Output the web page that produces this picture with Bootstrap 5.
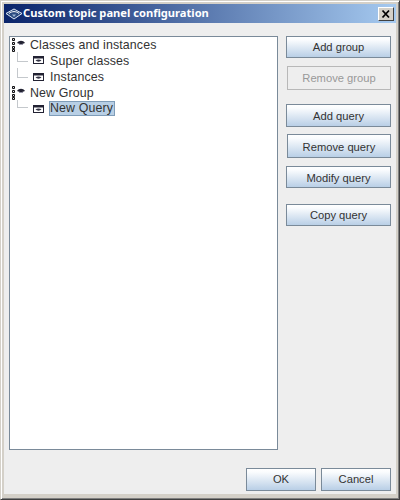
<!DOCTYPE html>
<html lang="en">
<head>
<meta charset="utf-8">
<title>Custom topic panel configuration</title>
<link href="https://cdn.jsdelivr.net/npm/bootstrap@5.3.0/dist/css/bootstrap.min.css" rel="stylesheet">
<style>
html,body{width:400px;height:500px;margin:0;overflow:hidden;background:#d4d0c8}
body{font-family:"Liberation Sans",Arial,sans-serif;font-size:12px;color:#333}
.win-frame{width:400px;height:500px;border:1px solid #404040;border-top-color:#d4d0c8;border-left-color:#d4d0c8;box-shadow:inset 1px 1px 0 #fff,inset -1px -1px 0 #808080;padding:3px}
.win-title{height:19px;background:linear-gradient(90deg,#0a246a,#a6caf0);color:#fff;font-family:"Noto Sans",sans-serif;font-weight:700;font-size:11.15px;padding-left:1px;padding-right:2px;flex:none}
.win-title svg{flex:none}
.win-close{width:16px;height:14px;background:#d4d0c8;border:1px solid;border-color:#fff #404040 #404040 #fff;padding:0;line-height:0;margin-left:auto}
.win-body{background:#eee;height:471px;padding:13px 5px 8px 5px}
.tree-pane{width:269px;height:414px;background:#fff;border:1px solid #7a8a99;padding:1px 0 0 1px;flex:none}
.tree-row{height:16px;white-space:nowrap;font-size:12.4px;letter-spacing:.12px;line-height:14px}
.tree-row svg{overflow:visible;flex:none}
.tree-kid{padding-left:6px}
.tree-elbow{width:11px;height:10px;border-left:1px solid #c4c8cc;border-bottom:1px solid #c4c8cc;margin-top:-2px;margin-right:5px;flex:none}
.tree-elbow.last{height:8px}
.tree-txt{margin-left:5px}
.tree-root{margin-left:4px}
.tree-sel{background:#b8cfe5;border:1px solid #7f9db9;line-height:13px;padding:0 1px 0 0;margin-left:4px;height:15px;margin-top:-1px}
.side-col{width:105px;margin-left:8px;flex:none}
.java-btn{display:block;--bs-btn-padding-x:0;--bs-btn-padding-y:0;--bs-btn-font-size:11.2px;--bs-btn-border-radius:0;--bs-btn-color:#333;--bs-btn-border-color:#7a8a99;height:22px;width:105px;border:1px solid #7a8a99;background:linear-gradient(#fff,#fafcfe 15%,#b9cfe6);color:#333;font-family:"Liberation Sans",Arial,sans-serif}
.java-btn.off{background:#eee;border-color:#b8b8b8;color:#999;opacity:1}
.shift-r{margin-left:1px;width:104px;height:24px}
.h-mid{height:23px}
.nudge{padding-top:2px}
.m-a{margin-top:8px}.m-b{margin-top:14px}.m-c{margin-top:7px}.m-d{margin-top:8px}.m-e{margin-top:16px}
.foot-bar{margin-top:18px;gap:5px}
.foot-bar .java-btn{width:70px;height:23px}
</style>
</head>
<body>
<div class="win-frame d-flex flex-column">
  <div class="win-title d-flex align-items-center">
    <svg width="18" height="12" viewBox="0 0 18 12"><path d="M1 5.500 9 1l8 4.500L9 11z" fill="#2b4a80" stroke="#dfe8f4" stroke-width="1"/><path d="M4 5.500C7 3 11 3 14 5.500" fill="none" stroke="#fff"/><path d="M7 6.500h4L9 9z" fill="#9db6d6"/></svg>
    <span>Custom topic panel configuration</span>
    <button class="win-close" aria-label="Close"><svg width="14" height="12" viewBox="0 0 14 12"><path d="M3.500 2.500 10 9.500M10 2.500 3.500 9.500" stroke="#000" stroke-width="1.800"/></svg></button>
  </div>
  <div class="win-body d-flex flex-column">
    <div class="d-flex">
      <div class="tree-pane">
        <div class="tree-row d-flex"><svg width="15" height="16" viewBox="0 -2 15 16"><path d="M1.500 -1.500h2v2h-2zM1.500 2.500h2v2h-2zM1.500 6.500h2v2h-2zM1.500 9.500h2v2h-2z" fill="#dde" stroke="#111"/><path d="M6 3c2-3 6-3 8 0-3 1.500-5 1.500-8 0z" fill="#223"/><path d="M8 4.500h4" stroke="#99a"/></svg><span class="tree-txt tree-root">Classes and instances</span></div>
        <div class="tree-row tree-kid d-flex"><span class="tree-elbow"></span><svg width="12" height="16" viewBox="0 0 12 16"><rect x=".5" y="2.500" width="10" height="7" fill="#fff" stroke="#223"/><path d="M0 3h11v1.500H0z" fill="#223"/><path d="M2.500 6.500c1.500-1.500 4.500-1.500 6 0-1.500 1.500-4.500 1.500-6 0z" fill="#334"/></svg><span class="tree-txt">Super classes</span></div>
        <div class="tree-row tree-kid d-flex"><span class="tree-elbow"></span><svg width="12" height="16" viewBox="0 0 12 16"><rect x=".5" y="3.500" width="10" height="7" fill="#fff" stroke="#223"/><path d="M0 4h11v1.500H0z" fill="#223"/><path d="M2.500 7.500c1.500-1.500 4.500-1.500 6 0-1.500 1.500-4.500 1.500-6 0z" fill="#334"/></svg><span class="tree-txt">Instances</span></div>
        <div class="tree-row d-flex"><svg width="15" height="16" viewBox="0 -2 15 16"><path d="M1.500 -1.500h2v2h-2zM1.500 2.500h2v2h-2zM1.500 6.500h2v2h-2zM1.500 9.500h2v2h-2z" fill="#dde" stroke="#111"/><path d="M6 3c2-3 6-3 8 0-3 1.500-5 1.500-8 0z" fill="#223"/><path d="M8 4.500h4" stroke="#99a"/></svg><span class="tree-txt tree-root">New Group</span></div>
        <div class="tree-row tree-kid d-flex"><span class="tree-elbow last"></span><svg width="12" height="16" viewBox="0 0 12 16"><rect x=".5" y="3.500" width="10" height="7" fill="#fff" stroke="#223"/><path d="M0 4h11v1.500H0z" fill="#223"/><path d="M2.500 7.500c1.500-1.500 4.500-1.500 6 0-1.500 1.500-4.500 1.500-6 0z" fill="#334"/></svg><span class="tree-sel">New Query</span></div>
      </div>
      <div class="side-col">
        <button class="btn java-btn">Add group</button>
        <button class="btn java-btn off shift-r m-a" disabled>Remove group</button>
        <button class="btn java-btn h-mid nudge m-b">Add query</button>
        <button class="btn java-btn shift-r nudge m-c">Remove query</button>
        <button class="btn java-btn nudge m-d">Modify query</button>
        <button class="btn java-btn m-e">Copy query</button>
      </div>
    </div>
    <div class="foot-bar d-flex justify-content-end">
      <button class="btn java-btn">OK</button>
      <button class="btn java-btn">Cancel</button>
    </div>
  </div>
</div>
</body>
</html>
